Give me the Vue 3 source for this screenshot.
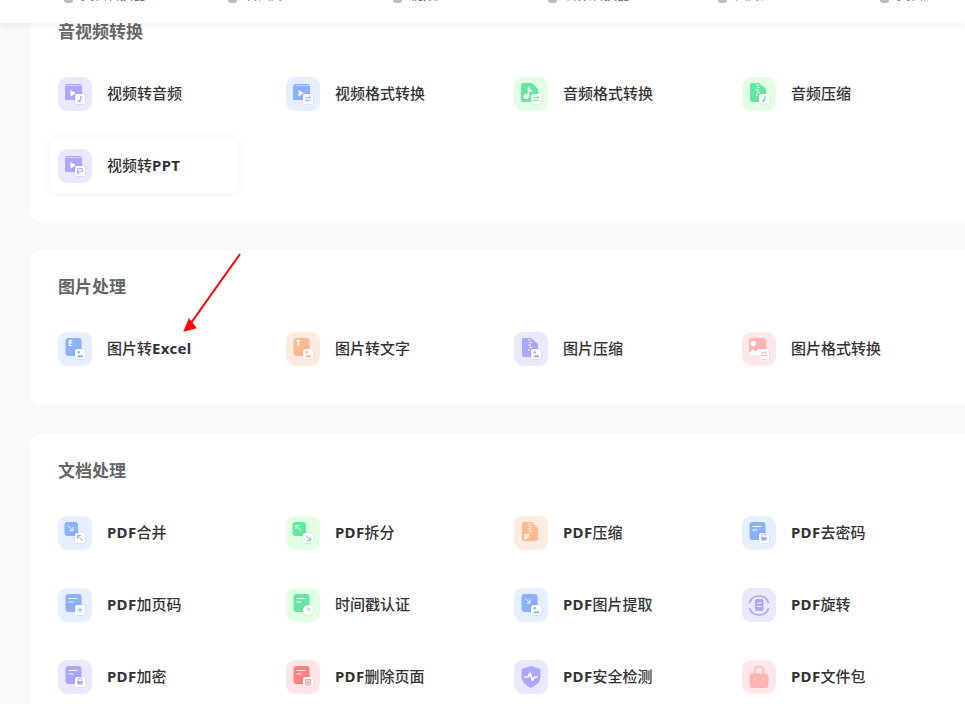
<template>
  <div class="page">
    <!-- 顶部导航，页面已滚动，只露出底部一点 -->
    <header class="top-bar">
      <div class="nav-row">
        <div v-for="n in navs" :key="n.label" class="nav-item" :class="{ active: n.active }">
          <i class="nav-icon"></i>
          <span>{{ n.label }}</span>
        </div>
      </div>
    </header>

    <main class="content">
      <section v-for="sec in sections" :key="sec.title" class="card">
        <h2 class="card-title">{{ sec.title }}</h2>
        <div class="tool-grid">
          <div v-for="t in sec.tools" :key="t.label" class="tool" :class="{ hovered: t.hovered }">
            <div class="tile" :class="t.color">
              <svg width="34" height="34" viewBox="0 0 34 34">
                <path v-for="(p, i) in shapes[t.base]" :key="i" :d="p[1]" :class="p[0]" />
                <text v-if="t.letter" :x="t.letterX || 10" :y="t.letterY || 14" class="letter">{{ t.letter }}</text>
                <g v-if="t.badge">
                  <circle v-if="t.badge === 'clock'" cx="22" cy="22" r="5" class="badge-bg" />
                  <rect v-else x="17" y="17" width="10" height="10" rx="2" class="badge-bg" />
                  <path v-for="(p, i) in badges[t.badge]" :key="i" :d="p[1]" :class="p[0]" />
                </g>
              </svg>
            </div>
            <span class="tool-name">
              <template v-for="(part, i) in splitLabel(t.label)" :key="i">
                <b v-if="/^[A-Za-z]+$/.test(part)" class="latin">{{ part }}</b>
                <template v-else>{{ part }}</template>
              </template>
            </span>
          </div>
        </div>
      </section>
    </main>

    <!-- 截图上的红色标注箭头 -->
    <svg class="mark-arrow" width="965" height="704" viewBox="0 0 965 704">
      <path d="M240 254L191 323" stroke="#f00" stroke-width="2" fill="none" />
      <path d="M183.300 331.700L189 318L196.700 328.300z" fill="#f00" />
    </svg>
  </div>
</template>

<script setup>
const navs = [
  { label: '文档转换器' },
  { label: '转图片' },
  { label: '视频处理', active: true },
  { label: '音频转换器' },
  { label: '图片处理' },
  { label: '文档处理' }
]

const docPath = 'M9 6h9l6 6v11a2 2 0 0 1-2 2H9a2 2 0 0 1-2-2V8a2 2 0 0 1 2-2z'
const boxPath = 'M10.500 6h10a3 3 0 0 1 3 3v12a3 3 0 0 1-3 3h-10a3 3 0 0 1-3-3V9a3 3 0 0 1 3-3z'
const linesPath = 'M10.500 10.500h9M10.500 14h5'

// 每个图标由若干 path 组成: [class, d]
const shapes = {
  clapper: [
    ['m', 'M7 8.500A1.500 1.500 0 0 1 8.500 7h14A1.500 1.500 0 0 1 24 8.500V23H8.500A1.500 1.500 0 0 1 7 21.500z'],
    ['dash', 'M7.500 8.500H24'],
    ['w', 'M12.500 13l5.500 3.200-5.500 3.200z']
  ],
  note: [
    ['m', docPath],
    ['wt', 'M14.500 19.500V11c0 2 2 2.500 3.500 3.500'],
    ['w', 'M14.500 19.500a2.500 2.500 0 1 1-5 0 2.500 2.500 0 0 1 5 0z']
  ],
  zip: [
    ['m', 'M9 6h8l7 6v11a2 2 0 0 1-2 2H10a2 2 0 0 1-2-2V8a2 2 0 0 1 1-2z'],
    ['ws', 'M14 8h3M15 10.500h3M14 13h3M15 15.500h3M14 18h2']
  ],
  letterBox: [['m', boxPath]],
  picture: [
    ['m', 'M10 6h11a3 3 0 0 1 3 3v11a3 3 0 0 1-3 3H10a3 3 0 0 1-3-3V9a3 3 0 0 1 3-3z'],
    ['w', 'M14 11.500a2.700 2.700 0 1 1-5.400 0 2.700 2.700 0 0 1 5.400 0z'],
    ['w', 'M7 21l4-3.500 3 2 3-3 3 3v3.500H9z']
  ],
  smallIn: [
    ['m', 'M9.500 6H17a3 3 0 0 1 3 3v8a3 3 0 0 1-3 3H9.500a3 3 0 0 1-3-3V9a3 3 0 0 1 3-3z'],
    ['ws', 'M10 9.500l5 5M15 11v3.500h-3.500']
  ],
  smallOut: [
    ['m', 'M9.500 6H17a3 3 0 0 1 3 3v8a3 3 0 0 1-3 3H9.500a3 3 0 0 1-3-3V9a3 3 0 0 1 3-3z'],
    ['ws', 'M15 14.500l-5-5M10 13V9.500h3.500']
  ],
  lines: [
    ['m', boxPath],
    ['ws', linesPath]
  ],
  boxIn: [
    ['m', boxPath],
    ['ws', 'M11 10l5 5M16 11.500V15h-3.500']
  ],
  rotate: [
    ['m', 'M15 11h4.500a2 2 0 0 1 2 2v8a2 2 0 0 1-2 2H15a2 2 0 0 1-2-2v-8a2 2 0 0 1 2-2z'],
    ['ws', 'M15 15h4.500M15 18.500h4.500'],
    ['s', 'M7.500 15C9 10 13 8 17 8s8 2 9.500 7M7.500 20C9 25 13 27 17 27s8-2 9.500-7']
  ],
  shield: [
    ['m', 'M17 6l9.500 3v7.500c0 5.500-4.500 9-9.500 11.500-5-2.500-9.500-6-9.500-11.500V9z'],
    ['wt', 'M10.500 17h3.500l2-4 2.500 7.500 2-3.500h3']
  ],
  bag: [
    ['s', 'M12.500 14v-3a4.500 4.500 0 0 1 9 0v3'],
    ['m', 'M10.500 13.500h13a3 3 0 0 1 3 3V25a3 3 0 0 1-3 3h-13a3 3 0 0 1-3-3v-8.500a3 3 0 0 1 3-3z'],
    ['ws', 'M12 19h1M21 19h1']
  ]
}

const badges = {
  note: [['s1', 'M22.500 24v-4.500l1.500 .8'], ['m', 'M22.500 24a1.200 1.200 0 1 1-2.400 0 1.200 1.200 0 0 1 2.400 0z']],
  swap: [['s1', 'M19 20.800h6l-1.800-1.600M25 23.300h-6l1.800 1.600']],
  ppt: [['s1', 'M19.500 19.700h5v2.600h-3.500v2.200h-1.500z']],
  img: [['m', 'M22 20.300a1.300 1.300 0 1 1-2.600 0 1.300 1.300 0 0 1 2.600 0z'], ['m', 'M18.800 25.200l2.600-2.400 1.500 1 1.200-1.200 1.300 2.600z']],
  upLeft: [['s1', 'M24.500 24.500L19.500 19.500M19.500 23v-3.500H23']],
  downRight: [['s1', 'M19.500 19.500L24.500 24.500M24.500 21v3.500H21']],
  plus: [['s1', 'M22 19.500v5M19.500 22h5']],
  clock: [['s1', 'M22 19.500V22h2.500']],
  lock: [['s1', 'M20 21v-1a2 2 0 0 1 4 0v1'], ['m', 'M19.300 21h5.400v3.500h-5.400z']],
  unlock: [['s1', 'M20 21v-1.200a2 2 0 0 1 4 0'], ['m', 'M19.300 21h5.400v3.500h-5.400z']],
  trash: [['s1', 'M18.800 19.800h6.400M19.800 20v5h4.400v-5M21.300 21.500v2M22.700 21.500v2']]
}

const sections = [
  {
    title: '音视频转换',
    tools: [
      { label: '视频转音频', color: 'purple', base: 'clapper', badge: 'note' },
      { label: '视频格式转换', color: 'blue', base: 'clapper', badge: 'swap' },
      { label: '音频格式转换', color: 'green', base: 'note', badge: 'swap' },
      { label: '音频压缩', color: 'green', base: 'zip', badge: 'note' },
      { label: '视频转PPT', color: 'purple', base: 'clapper', badge: 'ppt', hovered: true }
    ]
  },
  {
    title: '图片处理',
    tools: [
      { label: '图片转Excel', color: 'blue', base: 'letterBox', letter: 'E', badge: 'img' },
      { label: '图片转文字', color: 'orange', base: 'letterBox', letter: 'T', badge: 'img' },
      { label: '图片压缩', color: 'purple', base: 'zip', badge: 'img' },
      { label: '图片格式转换', color: 'pink', base: 'picture', badge: 'swap' }
    ]
  },
  {
    title: '文档处理',
    tools: [
      { label: 'PDF合并', color: 'blue', base: 'smallIn', badge: 'upLeft' },
      { label: 'PDF拆分', color: 'green', base: 'smallOut', badge: 'downRight' },
      { label: 'PDF压缩', color: 'orange', base: 'zip', letter: 'P', letterY: 24 },
      { label: 'PDF去密码', color: 'blue', base: 'lines', badge: 'unlock' },
      { label: 'PDF加页码', color: 'blue', base: 'lines', badge: 'plus' },
      { label: '时间戳认证', color: 'green', base: 'lines', badge: 'clock' },
      { label: 'PDF图片提取', color: 'blue', base: 'boxIn', badge: 'img' },
      { label: 'PDF旋转', color: 'purple', base: 'rotate' },
      { label: 'PDF加密', color: 'purple', base: 'lines', badge: 'lock' },
      { label: 'PDF删除页面', color: 'red', base: 'lines', badge: 'trash' },
      { label: 'PDF安全检测', color: 'purple', base: 'shield' },
      { label: 'PDF文件包', color: 'pink', base: 'bag' }
    ]
  }
]

// 拉丁字母部分单独加粗
function splitLabel(label) {
  return label.split(/([A-Za-z]+)/).filter(Boolean)
}
</script>

<style>
html, body {
  margin: 0;
  overflow: hidden;
}
</style>

<style scoped>
.page {
  position: relative;
  height: 704px;
  overflow: hidden;
  background: #f9f9f9;
  font-family: "Noto Sans", "Noto Sans CJK SC", sans-serif;
}

/* 顶栏 */
.top-bar {
  position: absolute;
  top: 0;
  left: 0;
  right: 0;
  height: 23px;
  background: #fff;
  box-shadow: 0 2px 8px rgba(0, 0, 0, 0.07);
  z-index: 2;
}

.nav-row {
  display: grid;
  grid-template-columns: 164px 165px 155px 170px 162px auto;
  height: 23px;
  padding-left: 64px;
  overflow: hidden;
}

.nav-item {
  display: flex;
  align-items: center;
  gap: 8px;
  height: 20px;
  margin-top: -17px;
  font-size: 13px;
  color: #666;
}

.nav-item.active {
  color: #6b4a33;
}

.nav-icon {
  width: 9px;
  height: 20px;
  border-radius: 3px;
  background: #bbb;
}

/* 内容 */
.content {
  display: flex;
  flex-direction: column;
  gap: 29px;
  padding-left: 30px;
}

.card {
  width: 1000px;
  box-sizing: border-box;
  padding: 25px 0 28px 19px;
  background: #fff;
  border-radius: 10px;
}

/* 第一张卡片被顶栏盖住一部分 */
.card:first-child {
  margin-top: -5px;
}

.card:last-child {
  margin-top: 1px;
}

.card-title {
  margin: 0 0 23px;
  padding-left: 9px;
  font-size: 17px;
  line-height: 24px;
  font-weight: 700;
  color: #666;
}

.tool-grid {
  display: grid;
  grid-template-columns: repeat(auto-fill, 190px);
  gap: 18px 38px;
}

.tool {
  display: flex;
  align-items: center;
  gap: 15px;
  height: 54px;
  padding-left: 9px;
  border-radius: 8px;
}

.tool.hovered {
  box-shadow: 0 0 10px rgba(0, 0, 0, 0.06);
}

.tool-name {
  margin-bottom: 4px;
  font-size: 15px;
  font-weight: 500;
  color: #333;
  white-space: nowrap;
}

.latin {
  font-weight: 700;
  letter-spacing: 0.3px;
}

.tile {
  width: 34px;
  height: 34px;
  border-radius: 9px;
  flex-shrink: 0;
  background: var(--bg);
}

.tile svg {
  display: block;
}

.blue { --bg: #e6efff; --main: #8ab0ff; }
.purple { --bg: #e8e8ff; --main: #aaa7ff; }
.green { --bg: #e3ffe3; --main: #67e6a2; }
.orange { --bg: #ffeadf; --main: #ffb98f; }
.red { --bg: #ffe6e6; --main: #ff8181; }
.pink { --bg: #ffe7e7; --main: #ffb3b3; }

.m { fill: var(--main); }
.w { fill: #fff; }
.s { fill: none; stroke: var(--main); stroke-width: 1.6; }
.s1 { fill: none; stroke: var(--main); stroke-width: 1; }
.ws { fill: none; stroke: #fff; stroke-width: 1; opacity: 0.9; }
.wt { fill: none; stroke: #fff; stroke-width: 1.6; stroke-linejoin: round; }
.dash { fill: none; stroke: #fff; stroke-width: 1; stroke-dasharray: 1.5 1; opacity: 0.7; }

.badge-bg {
  fill: #fff;
  filter: drop-shadow(0 0 1px rgba(0, 0, 0, 0.12));
}

.letter {
  font-family: "Noto Sans", sans-serif;
  font-size: 8px;
  font-weight: 700;
  fill: #fff;
}

.mark-arrow {
  position: absolute;
  top: 0;
  left: 0;
  z-index: 3;
  pointer-events: none;
}
</style>
